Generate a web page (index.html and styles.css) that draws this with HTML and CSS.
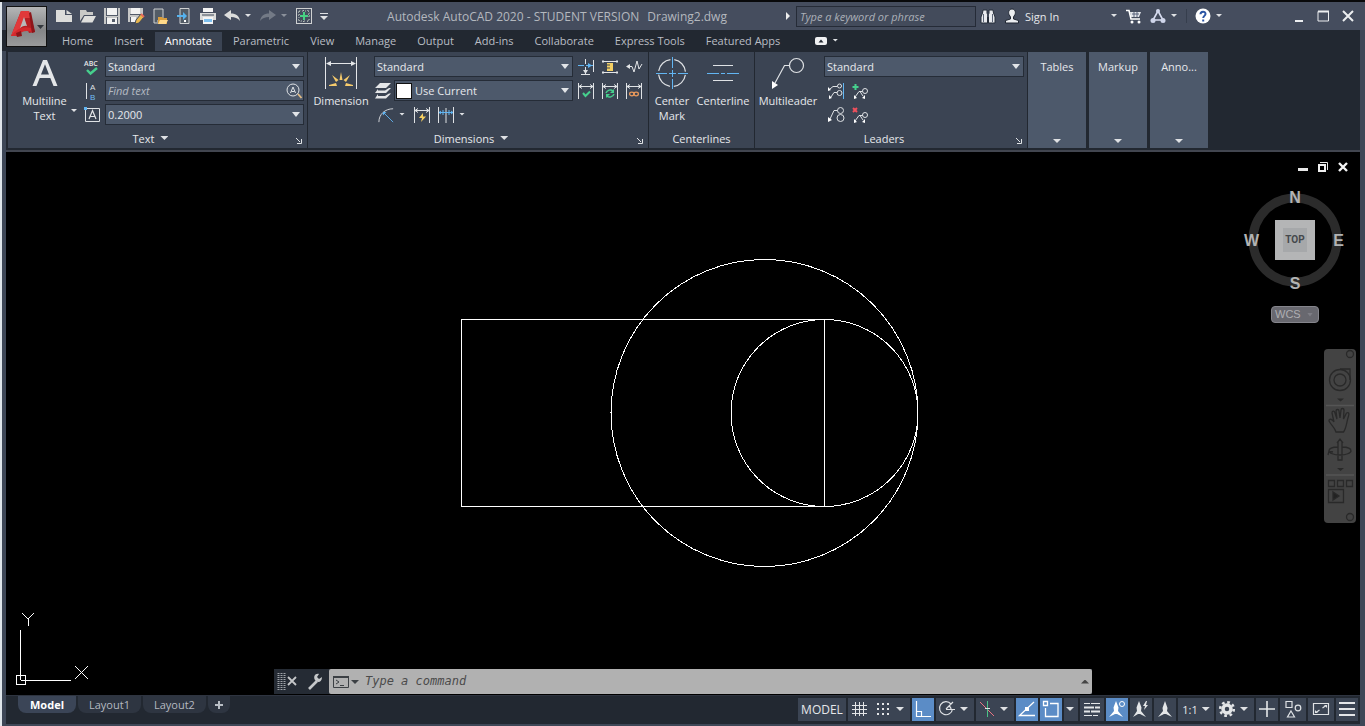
FILE: index.html
```
<!DOCTYPE html>
<html lang="en">
<head>
<meta charset="utf-8">
<title>Autodesk AutoCAD 2020 - Drawing2.dwg</title>
<link rel="stylesheet" href="styles.css">
</head>
<body>
<div class="window">
  <header class="titlebar">
    <button class="app-button" aria-label="Application menu">
      <svg viewBox="0 0 38 38" width="38" height="38">
        <path d="M4 28 14 3h8l6 21-6 1-2-5-8 2-3 6z" fill="#b41f24"/>
        <path d="M14 3h8l2 7-6 0-2 4-3 8-4 6-5 0z" fill="#e0393b"/>
        <path d="M17 9 13 20q4-3 7-2z" fill="#b9babb"/>
        <path d="M4 28q8-11 20-8l1 4q-9-3-15 4z" fill="#d4292d"/>
        <path d="M9 25l5-2 1 5-5 1z" fill="#8e1519"/>
        <path d="M22 5l2-1 4 20-3 1z" fill="#8e1519"/>
        <path d="M30 17h7l-3.500 4z" fill="#33373d"/>
      </svg>
    </button>
    <div class="quick">
      <button class="ico" aria-label="New"><svg viewBox="0 0 16 16"><path d="M0 2h9v5h7v7H0z" fill="#dcdcda"/><path d="M10.500 2v4H16z" fill="#dcdcda"/></svg></button>
      <button class="ico" aria-label="Open"><svg viewBox="0 0 16 16"><path d="M0 2h6l1 2h6v3H4L0 13z" fill="#c9c9c7"/><path d="M4.500 8H16l-3.500 6.500H1z" fill="#dfdfdd"/></svg></button>
      <button class="ico" aria-label="Save"><svg viewBox="0 0 16 16"><path d="M0 0h16v16H0z" fill="#c6c7c7"/><path d="M3 0h10v7H3zM3 10h10v6H3z" fill="#f2f2f2"/><path d="M2 7.500h12M2.500 9v7M13.500 9v7M2.500 0v7M13.500 0v7" stroke="#535b69"/><path d="M8 11h3v3H8z" fill="#535b69"/></svg></button>
      <button class="ico" aria-label="Save as"><svg viewBox="0 0 16 16"><path d="M0 0h15v8l-6 6H0z" fill="#c6c7c7"/><path d="M3 0h9v6H3zM3 9h5v5H3z" fill="#f2f2f2"/><path d="M2 6.500h11M2.500 9v5" stroke="#535b69"/><path d="M7 16l1-4 5-6 3 3-5 6z" fill="#e8b64c" stroke="#3f4858"/><path d="M13 6l3 3" stroke="#e86b5a" stroke-width="2"/></svg></button>
      <button class="ico" aria-label="Open from web and mobile"><svg viewBox="0 0 16 16"><path d="M2 1h9v14H2z" fill="#535c66" stroke="#cfd1d2"/><path d="M5 13h3" stroke="#ddd"/><path d="M6 9h4l1 1h4v6H6z" fill="#d99d3c"/><path d="M8 12h8l-2 4H6z" fill="#ffd98a"/></svg></button>
      <button class="ico" aria-label="Save to web and mobile"><svg viewBox="0 0 16 16"><path d="M4 .5h9v15H4z" fill="#535c66" stroke="#cfd1d2"/><path d="M8 13h2" stroke="#fff" stroke-width="2"/><path d="M1 7h6V4l4 4-4 4V9H1z" fill="#55b2ee"/></svg></button>
      <button class="ico" aria-label="Plot"><svg viewBox="0 0 16 16"><path d="M3 0h10v4H3z" fill="#f4f4f4"/><path d="M0 5h16v7H0z" fill="#d9dad9"/><path d="M2 7h12" stroke="#3f4858"/><path d="M3 9h10v7H3z" fill="#f4f4f4"/><path d="M4 11h8v3H4z" fill="#7ec0ef"/></svg></button>
      <span class="pair"><button class="ico" aria-label="Undo"><svg viewBox="0 0 16 16"><path d="M0 7 7 2v3.500c5 0 8 2 9 7.500-2.500-3-5-4-9-4V12z" fill="#dcdddc"/></svg></button><span class="caret"></span></span>
      <span class="pair dim"><button class="ico" aria-label="Redo"><svg viewBox="0 0 16 16"><path d="M16 7 9 2v3.500C4 5.500 1 7.500 0 13c2.500-3 5-4 9-4V12z" fill="#737a86"/></svg></button><span class="caret"></span></span>
      <button class="ico" aria-label="App manager"><svg viewBox="0 0 16 16" fill="none"><rect x=".5" y=".5" width="15" height="15" stroke="#cfd1d2"/><path d="M2 5l3-3M2 8l2-2M11 2l3 3M2 11l3 3M11 14l3-3M7 2.500h2M7 13.500h2M12 6l2 2" stroke="#b9c4bd" stroke-dasharray="1 1"/><path d="M3 3h10v10H3z" stroke="#b9c4bd" stroke-dasharray="1 2"/><path d="M8 4v8M4 8h8" stroke="#47d183" stroke-width="2"/></svg></button>
      <button class="ico half" aria-label="Customize"><svg viewBox="0 0 8 16"><path d="M0 5.500h8" stroke="#dfe1e4"/><path d="M0 8h8l-4 4z" fill="#dfe1e4"/></svg></button>
    </div>
    <h1 class="title"><span>Autodesk AutoCAD 2020 - STUDENT VERSION</span><span>Drawing2.dwg</span></h1>
    <div class="infocenter">
      <span class="tri-right"></span>
      <input class="search" type="text" aria-label="Search" placeholder="Type a keyword or phrase">
      <button class="ico" aria-label="Find"><svg viewBox="0 0 16 16"><path d="M3 2h4v3l.5 1.500V15H1V9l1.500-4zM13 2H9v3l-.5 1.500V15H15V9l-1.500-4z" fill="#e8eaee" stroke="#272e3a"/><path d="M3.500 6v8M12.500 6v8M7 8h2" stroke="#5c6576"/></svg></button>
      <button class="signin"><svg viewBox="0 0 16 16" width="16" height="16"><path d="M8 1c3 0 4 3 3 5.500L9.500 9v2l5 1.500V15h-13v-2.500l5-1.500V9L5 6.500C4 4 5 1 8 1z" fill="#eceef1" stroke="#202733"/></svg><span>Sign In</span><span class="caret"></span></button>
      <button class="ico" aria-label="Autodesk App Store"><svg viewBox="0 0 16 16" fill="none"><path d="M0 2.500h3L5 11h9" stroke="#fff" stroke-width="1.600"/><path d="M4 4h11l-2 5H5z" fill="#e2e5ea"/><path d="M6 6h7M8 4v5M11 4v5" stroke="#59637a"/><circle cx="6" cy="14" r="1.500" fill="#fff"/><circle cx="13" cy="14" r="1.500" fill="#fff"/></svg></button>
      <span class="pair"><button class="ico" aria-label="Stay connected"><svg viewBox="0 0 16 16" fill="none" stroke="#d7dcf0" stroke-width="1.600"><path d="M8 3 3 12h10z"/><circle cx="8" cy="3" r="2" fill="#cfd5ea" stroke="none"/><circle cx="3" cy="12.500" r="2.500" fill="#cfd5ea" stroke="none"/><circle cx="13" cy="12.500" r="2.500" fill="#cfd5ea" stroke="none"/></svg></button><span class="caret"></span></span>
      <span class="sep"></span>
      <span class="pair"><button class="ico" aria-label="Help"><svg viewBox="0 0 16 16"><circle cx="8" cy="8" r="7.500" fill="#fff"/><path d="M5.500 6.200C5.500 2.800 10.700 3 10.500 6c-.1 1.800-2.300 2-2.300 4" fill="none" stroke="#2c55a5" stroke-width="2"/><path d="M7.200 11.500h2v2h-2z" fill="#2c55a5"/></svg></button><span class="caret"></span></span>
    </div>
    <div class="wincontrols">
      <button class="ico" aria-label="Minimize"><svg viewBox="0 0 16 16"><path d="M5 13h8" stroke="#eceef0" stroke-width="2"/></svg></button>
      <button class="ico" aria-label="Maximize"><svg viewBox="0 0 16 16"><path d="M3 3.500h10.500v9.500H3z" fill="none" stroke="#eceef0"/><path d="M3 3.500h11" stroke="#eceef0" stroke-width="2"/></svg></button>
      <button class="ico" aria-label="Close"><svg viewBox="0 0 16 16"><path d="M3 3l10 10M13 3 3 13" stroke="#eceef0" stroke-width="2"/></svg></button>
    </div>
  </header>

  <nav class="tabs">
    <button>Home</button><button>Insert</button><button class="active">Annotate</button><button>Parametric</button><button>View</button><button>Manage</button><button>Output</button><button>Add-ins</button><button>Collaborate</button><button>Express Tools</button><button>Featured Apps</button>
    <span class="pair min"><button class="ico" aria-label="Minimize ribbon"><svg viewBox="0 0 16 16"><rect x="2" y="4" width="12" height="8" rx="2" fill="#f0f1f2"/><path d="M5.500 9.500h5L8 6.500z" fill="#222831"/></svg></button><span class="caret"></span></span>
  </nav>

  <section class="ribbon">
    <div class="panel p-text">
      <div class="body">
        <button class="big mtext"><svg viewBox="0 0 32 32" width="32" height="32"><path d="M3.500 29 14 3h4l10.500 26h-4L21.300 21H10.700L7.500 29zM12 17.500h8L16 7.200z" fill="#e4e6e8"/></svg><span>Multiline<br>Text</span><i class="caret"></i></button>
        <div class="icons col">
          <button class="ico" aria-label="Check spelling"><svg viewBox="0 0 16 16"><text x="0" y="7" font-size="7" font-weight="600" fill="#e4e6e8">ABC</text><path d="M3 11 6.500 14.500 13 9" fill="none" stroke="#46d08d" stroke-width="2.400"/></svg></button>
          <button class="ico" aria-label="Align text"><svg viewBox="0 0 16 16"><path d="M2.500 0v16" stroke="#dfe2e5"/><text class="glyph" x="6" y="7" fill="#dfe2e5">A</text><text class="glyph" x="6" y="17" fill="#72bdf2">B</text></svg></button>
          <button class="ico" aria-label="Text height"><svg viewBox="0 0 16 16"><path d="M2.500 1.500h13v13H1.500v-12" fill="none" stroke="#dfe2e5"/><path d="M0 0h3v3H0z" fill="#62b6f3"/><path d="M5 12 8.500 3.500 12 12M6.200 9.500h4.600" fill="none" stroke="#e4e6e8" stroke-width="1.200"/></svg></button>
        </div>
        <div class="fields">
          <label class="combo"><select aria-label="Text style"><option>Standard</option></select></label>
          <div class="find"><input type="text" placeholder="Find text" aria-label="Find text"><button class="ico" aria-label="Find"><svg viewBox="0 0 16 16"><circle cx="7" cy="7" r="6" fill="none" stroke="#dfe2e5"/><path d="M4.500 10 7 4l2.500 6M5.500 8.500h3" fill="none" stroke="#dfe2e5"/><path d="m12 11 3.500 4" stroke="#e3bc83" stroke-width="1.800"/></svg></button></div>
          <label class="combo"><select aria-label="Text height"><option>0.2000</option></select></label>
        </div>
      </div>
      <footer><span>Text</span><i class="tri"></i><svg class="launch" viewBox="0 0 6 6"><path d="M0 0l4 4M5.500 1v4.500H1" fill="none" stroke="#dfe2e5"/></svg></footer>
    </div>

    <div class="panel p-dim">
      <div class="body">
        <button class="big"><svg viewBox="0 0 32 32" width="32" height="32" fill="none" stroke="#e4e6e8"><path d="M.5 0v32M31.500 0v32M2 6.500h28"/><path d="M1 6.500 6 4v5zM31 6.500 26 4v5z" fill="#e4e6e8" stroke="none"/><g fill="#f6cb6c" stroke="none"><path d="M16 15l1.500 8h-3zM7 18l6.500 5-2.500 2zM25 18l-6.500 5 2.500 2zM4 28l7-2 1 3H4zM28 28l-7-2-1 3h8z"/></g></svg><span>Dimension</span></button>
        <div class="dimgrid">
          <div class="line">
            <label class="combo"><select aria-label="Dimension style"><option>Standard</option></select></label>
            <div class="icons">
              <button class="ico" aria-label="Break"><svg viewBox="0 0 16 16" fill="none"><path d="M0 6.500h6M8 6.500h7" stroke="#62b6f3"/><path d="M10 4l4 2.500-4 2.500z" fill="#62b6f3"/><path d="M15.500 1v12M7.500 0v5M7.500 8v7M3 15.500h9" stroke="#dfe2e5"/><path d="M5 11h5l-2.500 4z" fill="#dfe2e5"/></svg></button>
              <button class="ico" aria-label="Adjust space"><svg viewBox="0 0 16 16" fill="none"><path d="M0 2.500h16M0 13.500h16" stroke="#e4e6e8"/><path d="M1 1v3M15 1v3M1 12v3M15 12v3" stroke="#dfe2e5"/><path d="M5 4h6v8H5V9.500h3v-1H5V6.500h3v-1H5z" fill="#f4cf62"/></svg></button>
              <button class="ico" aria-label="Jog line"><svg viewBox="0 0 16 16" fill="none"><path d="M2 7.500h4L8 13l3-11 2 8 3-5" stroke="#e4e6e8"/><path d="M0 7.500 4 5v5z" fill="#e4e6e8"/></svg></button>
            </div>
          </div>
          <div class="line">
            <svg class="layers" viewBox="0 0 16 16" width="16" height="16" fill="#e4e6e8"><path d="M5 0h11l-5 5H0zM3 6l-3 4h11l5-5-2 0-4 2.500H3zM3 11l-3 4.500h11l5-5h-2l-4 2.500H3z"/></svg>
            <label class="combo layer"><i class="swatch"></i><select aria-label="Dimension layer"><option>Use Current</option></select></label>
            <div class="icons">
              <button class="ico" aria-label="Inspect"><svg viewBox="0 0 16 16" fill="none"><path d="M.5 0v16M15.500 0v16M1 3.500h14M4 1.500l-3 2 3 2M12 1.500l3 2-3 2" stroke="#dfe2e5"/><path d="M5 10l2.500 3L12 8.500" stroke="#46d08d" stroke-width="2"/></svg></button>
              <button class="ico" aria-label="Update"><svg viewBox="0 0 16 16" fill="none"><path d="M.5 0v16M15.500 0v16M1 3.500h14M4 1.500l-3 2 3 2M12 1.500l3 2-3 2" stroke="#dfe2e5"/><path d="M4 10c1-3 5-4 7-2M12 11c-1 3-5 4-7 2" stroke="#46d08d" stroke-width="1.400"/><path d="M12 6v4H8zM4 15v-4h4z" fill="#46d08d"/></svg></button>
              <button class="ico" aria-label="Reassociate"><svg viewBox="0 0 16 16" fill="none"><path d="M.5 0v16M15.500 0v16M1 3.500h14M4 1.500l-3 2 3 2M12 1.500l3 2-3 2" stroke="#dfe2e5"/><ellipse cx="5.800" cy="11" rx="2.200" ry="1.800" stroke="#e8995c" stroke-width="1.300"/><ellipse cx="10.200" cy="11" rx="2.200" ry="1.800" stroke="#e8995c" stroke-width="1.300"/></svg></button>
            </div>
          </div>
          <div class="line tools">
            <span class="pair"><button class="ico" aria-label="Radius"><svg viewBox="0 0 18 18" fill="none"><path d="M1 17C1 8 8 2 17 2" stroke="#dfe2e5"/><path d="M7 7l10 10" stroke="#62b6f3"/><path d="M5.500 5.500h4l-4 4z" fill="#62b6f3"/></svg></button><span class="caret"></span></span>
            <button class="ico" aria-label="Quick dimension"><svg viewBox="0 0 16 16" fill="none"><path d="M.5 0v16M15.500 0v16M1 3.500h14M4 1.500l-3 2 3 2M12 1.500l3 2-3 2" stroke="#dfe2e5"/><path d="M9 6l-4 5h3l-1 4 5-5.500H9z" fill="#f4cf62"/></svg></button>
            <span class="pair"><button class="ico" aria-label="Continue"><svg viewBox="0 0 16 16" fill="none"><path d="M.5 0v16M15.500 0v16M8 1v15" stroke="#dfe2e5"/><path d="M1 5.500h14M5 3v5M11 3v5M3 4l-2 1.500L3 7M13 4l2 1.500L13 7" stroke="#62b6f3"/></svg></button><span class="caret"></span></span>
          </div>
        </div>
      </div>
      <footer><span>Dimensions</span><i class="tri"></i><svg class="launch" viewBox="0 0 6 6"><path d="M0 0l4 4M5.500 1v4.500H1" fill="none" stroke="#dfe2e5"/></svg></footer>
    </div>

    <div class="panel p-center">
      <div class="body">
        <button class="big"><svg viewBox="0 0 32 32" width="32" height="32" fill="none"><circle cx="16" cy="16" r="13.500" stroke="#dfe2e5" stroke-width="1.200" stroke-dasharray="17.200 4" stroke-dashoffset="-2"/><path d="M0 16.500h11M13 16.500h7M22 16.500h10M16.500 0v11M16.500 13v7M16.500 22v10" stroke="#62b6f3"/></svg><span>Center<br>Mark</span></button>
        <button class="big"><svg viewBox="0 0 32 32" width="32" height="32" fill="none"><path d="M6 8.500h20M6 23.500h20" stroke="#dfe2e5"/><path d="M0 16.500h12M14 16.500h4M20 16.500h12" stroke="#62b6f3"/></svg><span>Centerline</span></button>
      </div>
      <footer><span>Centerlines</span></footer>
    </div>

    <div class="panel p-lead">
      <div class="body">
        <button class="big"><svg class="mleader" viewBox="0 0 32 32" width="32" height="32" fill="none"><circle cx="24.500" cy="8.500" r="7" stroke="#dfe2e5" stroke-width="1.200"/><path d="M17.500 8.500h-5L3 26" stroke="#dfe2e5" stroke-width="1.200"/><path d="M0 32v-8l6 4z" fill="#fff"/></svg><span>Multileader</span></button>
        <div class="leadgrid">
          <label class="combo"><select aria-label="Leader style"><option>Standard</option></select></label>
          <div class="icons">
            <button class="ico" aria-label="Align leaders"><svg viewBox="0 0 16 16" fill="none" stroke="#dfe2e5"><path d="M15.500 0v16" stroke="#62b6f3"/><circle cx="11.500" cy="3" r="2"/><circle cx="11.500" cy="10" r="2.500"/><path d="M9 3.500H5L2 6M9 9.500H6L3 14"/><path d="M0 8V4l3 3zM1 16v-4l3 3z" fill="#fff" stroke="none"/></svg></button>
            <button class="ico" aria-label="Add leader"><svg viewBox="0 0 16 16" fill="none" stroke="#dfe2e5"><circle cx="13" cy="8" r="2.500"/><path d="M10.500 8.500H7L3 14M8 8.500 11 13"/><path d="M2 16v-4l3 3zM10 15l3 1v-4z" fill="#fff" stroke="none"/><path d="M3.500 1v6M.5 4h6" stroke="#46d08d" stroke-width="2"/></svg></button>
          </div>
          <div class="icons">
            <button class="ico" aria-label="Collect leaders"><svg viewBox="0 0 16 16" fill="none" stroke="#dfe2e5"><circle cx="12.500" cy="3.500" r="3"/><circle cx="12.500" cy="11" r="3.500"/><path d="M9.500 3.500H6L2 12"/><path d="M0 15v-5l4 3z" fill="#fff" stroke="none"/></svg></button>
            <button class="ico" aria-label="Remove leader"><svg viewBox="0 0 16 16" fill="none" stroke="#dfe2e5"><circle cx="13" cy="8" r="2.500"/><path d="M10.500 8.500H7L3 14M8 8.500 11 13"/><path d="M2 16v-4l3 3zM10 15l3 1v-4z" fill="#fff" stroke="none"/><path d="M1 1l4 4M5 1 1 5" stroke="#f0505c" stroke-width="2"/></svg></button>
          </div>
        </div>
      </div>
      <footer><span>Leaders</span><svg class="launch" viewBox="0 0 6 6"><path d="M0 0l4 4M5.500 1v4.500H1" fill="none" stroke="#dfe2e5"/></svg></footer>
    </div>
    <div class="collapsed">
      <button><span>Tables</span><i class="tri"></i></button>
      <button><span>Markup</span><i class="tri"></i></button>
      <button><span>Anno...</span><i class="tri"></i></button>
    </div>
  </section>

  <main class="canvas">
    <svg class="drawing" viewBox="0 0 458 308" width="458" height="308" fill="none" stroke="#fff" shape-rendering="crispEdges">
      <path d="M.5 60.500h363v187H.500z"/>
      <circle cx="303.500" cy="154" r="153.500"/>
      <circle cx="363.500" cy="154" r="93.500"/>
    </svg>
    <svg class="ucs" viewBox="0 0 74 76" width="74" height="76" fill="none" stroke="#fff" shape-rendering="crispEdges">
      <path d="M.5 63.500h9v9h-9zM4.500 18v50M4.500 68.500H55M6 1l6 6 6-6M12.500 7v7M59 54l13 13M72 54 59 67"/>
    </svg>
    <div class="docs">
      <button class="ico" aria-label="Minimize drawing"><svg viewBox="0 0 12 12"><path d="M1 8.500h10" stroke="#e8e8e8" stroke-width="3"/></svg></button>
      <button class="ico" aria-label="Restore drawing"><svg viewBox="0 0 12 12" fill="none"><path d="M2 4h6v6H2z" stroke="#f0f0f0" stroke-width="2"/><path d="M3 1.500h7.500V9" stroke="#e8e8e8"/></svg></button>
      <button class="ico" aria-label="Close drawing"><svg viewBox="0 0 12 12"><path d="M2 2l8 8M10 2l-8 8" stroke="#f4f4f4" stroke-width="2.400"/></svg></button>
    </div>
    <div class="viewcube">
      <svg viewBox="0 0 104 104" width="104" height="104"><circle cx="52" cy="52" r="42" fill="none" stroke="#2b2b2b" stroke-width="9"/><rect x="32" y="32" width="40" height="40" fill="#b4b5b6"/><rect x="40" y="40" width="24" height="24" fill="#a6a8aa"/></svg>
      <span class="n">N</span><span class="w">W</span><span class="top">TOP</span><span class="e">E</span><span class="s">S</span>
    </div>
    <button class="wcs"><span>WCS</span><i class="tri"></i></button>
    <div class="navbar">
      <svg viewBox="0 0 32 174" width="32" height="174" fill="none" stroke="#292929" stroke-width="1.300">
        <circle cx="26" cy="5" r="3.500"/><circle cx="26" cy="168" r="3.500"/>
        <circle cx="16" cy="31" r="10.500"/><circle cx="16" cy="31" r="6"/><path d="M16 20h10v11"/>
        <path d="M13 49.500h7l-3.500 3zM13 119h7l-3.500 3z" fill="#292929" stroke="none"/>
        <path d="M2 56.500h28M2 126h28" stroke="#555"/>
        <path d="M12 83c-1-4-5-7-7-11 0-3 3-2 5 1L8 64c0-2 2-3 3 0l2 6-1-8c0-2 3-2 3 0l1 7 1-8c0-2 3-2 3 0l-.5 9 3-6c2-1 3 0 2 3-2 6-2 12-5 16z"/>
        <path d="M14 93v18h4V93M13 94l3-4 3 4M14 98c-6 0-9 2-9 4s5 4 11 4 11-2 11-4-3-4-9-4M9 103l-4-1-1 4"/>
        <path d="M4.500 131.500h6v6h-6zM13.500 131.500h6v6h-6zM22.500 131.500h6v6h-6zM4.500 140.500h15v13h-15z"/><path d="M9 143v8l6-4z" fill="#222"/>
      </svg>
    </div>
    <div class="command">
      <svg viewBox="0 0 56 24" width="56" height="24" fill="none"><path d="M4.500 4v17M7.500 4v17M10.500 4v17" stroke="#9fa3a8" stroke-dasharray="1 1" stroke-width="2"/><path d="M14 8l8 8M22 8l-8 8" stroke="#c5c7c9" stroke-width="1.800"/><path d="M35 20l8-8" stroke="#c5c7c9" stroke-width="2.600"/><path d="M48 8l-3 2-2-2 2-3c-4-1-6 3-4 6s7 3 7-3z" fill="#c5c7c9"/></svg>
      <label class="prompt">
        <svg viewBox="0 0 28 14" width="28" height="14" fill="none"><path d="M.5 1.500h15v11H.5z" stroke="#3c4044"/><path d="M0 2h16" stroke="#3c4044" stroke-width="2"/><path d="M3 5l3 2-3 2M7 10.500h4" stroke="#3c4044"/><path d="M18 5h8l-4 4z" fill="#3c4044"/></svg>
        <input type="text" placeholder="Type a command" aria-label="Command">
        <i class="up"></i>
      </label>
    </div>
  </main>

  <footer class="status">
    <div class="layouts">
      <button class="active">Model</button><button>Layout1</button><button>Layout2</button><button class="plus" aria-label="New layout"><svg viewBox="0 0 10 10" width="10" height="10"><path d="M5 1v8M1 5h8" stroke="#b9bec5" stroke-width="2"/></svg></button>
    </div>
    <div class="toggles">
      <button class="model">MODEL</button>
      <span class="grp">
        <button aria-label="Grid"><svg viewBox="0 0 18 18"><path d="M5.500 2v14M9.500 2v14M13.500 2v14M2 5.500h15M2 9.500h15M2 13.500h15" stroke="#e4e6e8"/></svg></button>
        <button aria-label="Snap"><svg viewBox="0 0 18 18"><path d="M3 4h12M3 9h12M3 14h12" stroke="#e4e6e8" stroke-width="2" stroke-dasharray="2 3"/></svg></button><i class="tri"></i>
      </span>
      <button class="on" aria-label="Ortho"><svg viewBox="0 0 18 18" fill="none"><path d="M2.500 1v15.500H17M2.500 11.500h5v5" stroke="#fff" stroke-width="1.200"/></svg></button>
      <span class="grp">
        <button aria-label="Polar tracking"><svg viewBox="0 0 18 18" fill="none" stroke="#dfe2e5" stroke-width="1.200"><path d="M13 4a6.500 6.500 0 1 0 1.500 5M8 9l7-7M8 9.500h9M11 6a4 4 0 0 1 2 4"/></svg></button><i class="tri"></i>
      </span>
      <span class="grp">
        <button aria-label="Isometric drafting"><svg viewBox="0 0 18 18"><path d="M2 2l14 14" stroke="#e87482"/><path d="M9.500 1v16" stroke="#4bc286"/><path d="M7 8.500h5" stroke="#dfe2e5"/></svg></button><i class="tri"></i>
      </span>
      <button class="on" aria-label="Object snap tracking"><svg viewBox="0 0 18 18" fill="none"><path d="M16 2 1.500 15.500H17" stroke="#fff" stroke-width="1.300"/><path d="M7 7h4v4H7z" fill="#fff"/></svg></button>
      <button class="on" aria-label="Object snap"><svg viewBox="0 0 18 18" fill="none"><path d="M1.500 1.500h4v4h-4zM8 3.500h8v13H3.500V8" stroke="#fff" stroke-width="1.300"/></svg></button>
      <span class="grp end"><i class="tri"></i></span>
      <button class="lw" aria-label="Lineweight"><svg viewBox="0 0 18 18"><path d="M1 3.500h6M8 3.500h9M1 15.500h8M10 15.500h5" stroke="#e4e6e8"/><path d="M1 7.500h10M12 7.500h5M1 11.500h6M8 11.500h9" stroke="#e4e6e8" stroke-width="2"/></svg></button>
      <button class="on" aria-label="Annotation visibility"><svg viewBox="0 0 18 18"><path d="M8 1l2.500 6.500L10 11l5 6-6-3H7l-6 3 5-6-.5-3.500z" fill="#fff"/><circle cx="14" cy="4" r="2.500" fill="none" stroke="#fff"/></svg></button>
      <button aria-label="Auto scale"><svg viewBox="0 0 18 18" fill="#e4e6e8"><path d="M7 1l2.500 6.500L9 11l5 6-6-3H6l-5 3 4-6-.5-3.500zM14 1l-3 5h2l-1 4 4-5h-2l1-4z"/></svg></button>
      <button aria-label="Annotation scale icon"><svg viewBox="0 0 18 18" fill="#e4e6e8"><path d="M9 1l2.500 7L11 11l5 6-6-3H8l-6 3 5-6-.5-3z"/></svg></button>
      <button class="scale"><span>1:1</span><i class="tri"></i></button>
      <span class="grp gear">
        <button aria-label="Workspace"><svg viewBox="0 0 18 18" fill="none" stroke="#e4e6e8"><circle cx="9" cy="9" r="4" stroke-width="3.500"/><circle cx="9" cy="9" r="6.800" stroke-width="2.600" stroke-dasharray="2.670 2.670"/></svg></button><i class="tri"></i>
      </span>
      <button aria-label="Annotation monitor"><svg viewBox="0 0 18 18"><path d="M9 1v16M1 9h16" stroke="#e4e6e8" stroke-width="1.600"/></svg></button>
      <button class="wide" aria-label="Isolate objects"><svg viewBox="0 0 18 18" fill="none" stroke="#dfe2e5" stroke-width="1.200"><path d="M2 1.500h6v6H2zM7 11l3.500 6h-7z"/><circle cx="14" cy="8" r="2.800"/></svg></button>
      <button class="wide" aria-label="Clean screen"><svg viewBox="0 0 18 18" fill="none" stroke="#dfe2e5" stroke-width="1.200"><path d="M1.500 3.500h15v11h-15zM10.500 8 14 5.500M7.500 10 4 12.500"/><path d="M12 5h3v3zM3 10v3h3z" fill="#dfe2e5" stroke="none"/></svg></button>
      <button aria-label="Customization"><svg viewBox="0 0 18 18"><path d="M1 3h16M1 9h16M1 15h16" stroke="#e4e6e8" stroke-width="1.800"/></svg></button>
    </div>
  </footer>
</div>
</body>
</html>
```
FILE: styles.css
```
* { box-sizing: border-box; }
html, body { height: 100%; margin: 0; }
body {
  padding: 2px 0 0 2px;
  background: linear-gradient(#08090b 0 2px, #dfe5ea 2px);
  font: 11px/15px "Open Sans", "Noto Sans", sans-serif;
  color: #e6e8eb;
  overflow: hidden;
}
button, input, select { font: inherit; color: inherit; background: none; border: 0; padding: 0; margin: 0; }
input, select { min-width: 0; outline: 0; }
svg { display: block; font-family: "Open Sans", sans-serif; overflow: visible; }

.window { position: relative; height: 100%; display: flex; flex-direction: column; background: #3e4757; padding: 0 5px 2px 4px; }
.ico { flex: none; width: 16px; height: 16px; }
.ico svg { width: 100%; height: 100%; }
.ico.half { width: 8px; }
.caret, .tri { flex: none; display: inline-block; width: 8px; height: 4px; background: #dfe1e4; clip-path: polygon(1px 0, 7px 0, 4px 3px); }
.tri { clip-path: polygon(0 0, 100% 0, 50% 100%); }
.pair { display: flex; align-items: center; gap: 4px; }
.dim .caret { background: #8b919b; }
.glyph { font: 8px "Liberation Sans", sans-serif; }

/* Title bar */
.titlebar { height: 28px; flex: none; margin: 0 -5px 0 -4px; padding: 0 9px 0 54px; display: flex; align-items: center; background: #454d5e; }
.app-button { position: absolute; z-index: 2; left: 4px; top: 4px; width: 41px; height: 41px; border: 1px solid #111; background: linear-gradient(#b5b6b7, #858687 60%, #999a9b); }
.quick { display: flex; align-items: center; gap: 8px; }
.title { flex: 1; display: flex; justify-content: center; gap: 8px; margin: 0; font-size: 12px; font-weight: 400; color: #b4b8be; white-space: nowrap; }
.infocenter { display: flex; align-items: center; gap: 8px; }
.tri-right { width: 4px; height: 8px; background: #eee; clip-path: polygon(0 0, 100% 50%, 0 100%); margin-right: -2px; }
.search { width: 180px; height: 21px; padding: 0 3px; border: 1px solid #252b37; background: #434b5b; font-style: italic; margin-right: -4px; }
.search::placeholder { color: #abb0b8; opacity: 1; }
.signin { display: flex; align-items: center; gap: 5px; width: 114px; }
.signin .caret { margin-left: auto; }
.sep { width: 1px; height: 14px; background: #363e4d; }
.wincontrols { display: flex; gap: 9px; margin-left: 67px; }

/* Ribbon tabs */
.tabs { height: 21px; flex: none; margin-left: -4px; padding-left: 50px; display: flex; align-items: flex-end; gap: 1px; background: #222831; color: #b9bdc4; }
.tabs > button { height: 19px; padding: 0 10px 2px; white-space: nowrap; }
.tabs .active { background: #3b4453; color: #fff; }
.tabs .min { height: 21px; margin-left: 22px; gap: 2px; }

/* Ribbon panels */
.ribbon { flex: none; height: 101px; display: flex; gap: 1px; padding: 1px 0 4px 2px; background: #222831; box-shadow: inset 0 -2px #424650; }
.panel { flex: none; display: flex; flex-direction: column; background: #3b4453; }
.panel .body { flex: 1; display: flex; padding-top: 4px; }
.panel > footer { position: relative; height: 18px; padding-bottom: 2px; display: flex; align-items: center; justify-content: center; gap: 6px; margin-right: 14px; }
.p-center > footer { margin-right: 0; }
.launch { position: absolute; right: -9px; bottom: 4px; width: 6px; height: 6px; }
.p-text { width: 299px; }
.p-dim { width: 340px; }
.p-center { width: 105px; }
.p-lead { width: 272px; }

.big { position: relative; display: flex; flex-direction: column; align-items: center; gap: 4px; width: 66px; flex: none; text-align: center; align-self: flex-start; padding-top: 1px; }
.mtext { width: 73px; }
.mtext .caret { position: absolute; right: 3px; bottom: 10px; }
.icons { display: flex; gap: 8px; align-items: center; }
.icons.col { flex-direction: column; align-items: flex-start; padding: 3px 0 0 3px; width: 24px; }
.fields { flex: 1; display: flex; flex-direction: column; gap: 3px; padding-right: 3px; }
.combo, .find { position: relative; display: flex; align-items: center; height: 21px; background: #4d596b; border: 1px solid #252c37; }
.combo select { flex: 1; height: 100%; padding: 0 16px 0 2px; appearance: none; }
.combo::after { content: ""; position: absolute; right: 3px; top: 7px; width: 8px; height: 5px; background: #e2e5e8; clip-path: polygon(0 0, 100% 0, 50% 100%); pointer-events: none; }
.find { padding: 0 1px 0 2px; }
.find input { flex: 1; font-style: italic; }
.find input::placeholder { color: #b4bac2; opacity: 1; }

.dimgrid { flex: 1; display: flex; flex-direction: column; gap: 3px; }
.line { display: flex; align-items: center; height: 21px; }
.line .combo { flex: 1; }
.line > .icons { padding: 0 6px 0 5px; }
.layers { margin: 0 3px 0 1px; }
.swatch { width: 16px; height: 16px; margin: 0 1px; border: 1px solid #111; background: #fff; flex: none; }
.line.tools { gap: 8px; padding-left: 4px; }
.p-center .big { width: 46px; }
.p-center .big + .big { width: 56px; }
.leadgrid { flex: 1; display: flex; flex-direction: column; gap: 3px; padding: 0 3px; }
.leadgrid .icons { height: 21px; padding-left: 4px; }
.collapsed { display: flex; gap: 3px; }
.collapsed button { display: flex; flex-direction: column; align-items: center; justify-content: space-between; width: 58px; height: 96px; padding: 7px 0 5px; background: #4d596b; }

/* Drawing area */
.canvas { position: relative; flex: 1; min-height: 0; background: #000; overflow: hidden; }
.drawing { position: absolute; left: 455px; top: 107px; }
.ucs { position: absolute; left: 10px; bottom: 7px; }
.docs { position: absolute; right: 11px; top: 9px; display: flex; gap: 8px; }
.docs .ico { width: 12px; height: 12px; }
.viewcube { position: absolute; right: 13px; top: 36px; width: 104px; height: 104px; font: bold 16px/16px "Liberation Sans", Arial, sans-serif; color: #b2b3b3; }
.viewcube span { position: absolute; left: 0; width: 104px; text-align: center; }
.viewcube .n { top: 2px; }
.viewcube .s { bottom: 0; }
.viewcube .w, .viewcube .e { top: 45px; width: auto; }
.viewcube .w { left: 1px; }
.viewcube .e { left: auto; right: 3px; }
.viewcube .top { top: 44px; font: bold 10px/16px Roboto, sans-serif; color: #45484c; }
.wcs { position: absolute; right: 41px; top: 154px; width: 48px; height: 17px; display: flex; align-items: center; justify-content: space-between; padding: 0 5px 0 3px; border: 1px solid #85858c; border-radius: 4px; background: #68686f; color: #aeaeb2; font: 11px/15px "Liberation Sans", sans-serif; }
.wcs .tri { background: #7e7e86; width: 6px; }
.navbar { position: absolute; right: 4px; top: 197px; border-radius: 4px; background: #434343; }

/* Command line */
.command { position: absolute; left: 268px; bottom: 1px; width: 818px; height: 25px; display: flex; background: #252b34; }
.prompt { flex: 1; display: flex; align-items: center; gap: 4px; margin-left: -1px; padding: 0 3px 0 4px; background: #b1b1b1; border-radius: 2px; }
.prompt input { flex: 1; font: italic 12px/15px "DejaVu Sans Mono", monospace; }
.prompt input::placeholder { color: #4b4b4b; opacity: 1; }
.up { width: 8px; height: 4px; background: #444; clip-path: polygon(0 100%, 100% 100%, 50% 0); }

/* Status bar */
.status { flex: none; height: 29px; display: flex; justify-content: space-between; background: #222831; border-top: 1px solid #2e3440; }
.layouts { display: flex; align-items: flex-start; padding-left: 12px; color: #b4b9c0; }
.layouts button { height: 17px; padding: 0 11px; margin-right: 2px; background: #2e3541; border-radius: 0 0 8px 8px; }
.layouts .active { background: #3b4557; color: #fff; font-weight: 700; }
.layouts button.active { padding: 0 12px; }
.layouts button.plus { width: 22px; padding: 0 6px; }
.toggles { display: flex; align-items: center; gap: 2px; padding: 0 2px 2px 0; }
.toggles button { display: flex; align-items: center; justify-content: center; width: 22px; height: 23px; background: #3b4453; }
.toggles svg { width: 18px; height: 18px; flex: none; }
.toggles .grp { display: flex; align-items: center; gap: 2px; height: 23px; padding-right: 6px; background: #3b4453; }
.toggles button.on { background: #5b8cc6; }
.toggles button.model { width: 48px; font-size: 12px; }
.toggles button.scale { width: 36px; gap: 4px; }
.toggles .end { padding: 0 4px 0 2px; }
.toggles button.lw { width: 24px; }
.toggles button.wide { width: 26px; }
```
